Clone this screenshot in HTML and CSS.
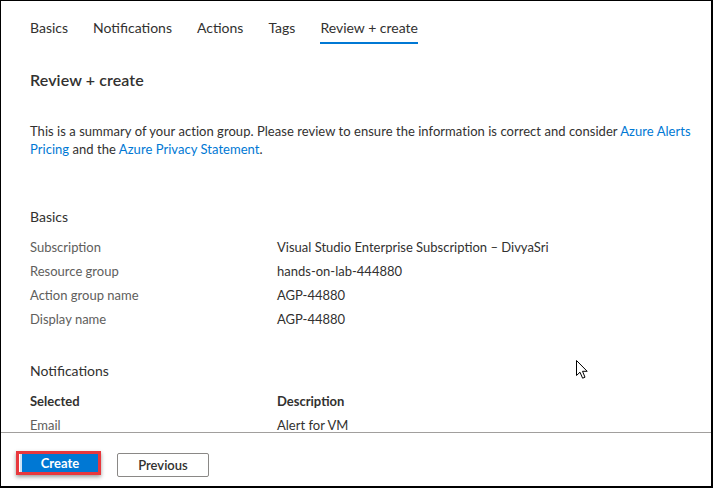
FILE: index.html
```html
<!DOCTYPE html>
<html>
<head>
<meta charset="utf-8">
<link rel="stylesheet" href="styles.css">
</head>
<body>
<div class="frame">
  <nav class="tabs">
    <span class="tab">Basics</span>
    <span class="tab">Notifications</span>
    <span class="tab">Actions</span>
    <span class="tab">Tags</span>
    <span class="tab active">Review + create</span>
  </nav>
  <main class="content">
    <h2 class="title">Review + create</h2>
    <p class="intro">This is a summary of your action group. Please review to ensure the information is correct and consider <a class="link">Azure Alerts Pricing</a> and the <a class="link">Azure Privacy Statement</a>.</p>
    <h3 class="section">Basics</h3>
    <div class="grid">
      <div class="label">Subscription</div><div class="value">Visual Studio Enterprise Subscription – DivyaSri</div>
      <div class="label">Resource group</div><div class="value">hands-on-lab-444880</div>
      <div class="label">Action group name</div><div class="value">AGP-44880</div>
      <div class="label">Display name</div><div class="value">AGP-44880</div>
    </div>
    <h3 class="section section-gap">Notifications</h3>
    <div class="grid">
      <div class="head">Selected</div><div class="head">Description</div>
      <div class="label">Email</div><div class="value">Alert for VM</div>
    </div>
  </main>
  <footer class="footer">
    <div class="highlight"><button class="btn-primary">Create</button></div>
    <button class="btn-secondary">Previous</button>
  </footer>
  <svg class="cursor" width="14" height="20" viewBox="0 0 14 20"><path d="M0.5 0.5 L0.5 15.5 L4 12.2 L6.6 18.2 L9 17.2 L6.5 11.3 L11.2 11.3 Z" fill="#fff" stroke="#000" stroke-width="1" stroke-linejoin="miter"/></svg>
</div>
</body>
</html>
```
FILE: styles.css
```css
* { box-sizing: border-box; }
html, body { margin: 0; padding: 0; background: #fff; }
body { font-family: "Lato", "Liberation Sans", sans-serif; color: #323130; }
.frame {
  position: relative;
  width: 713px; height: 488px;
  border-style: solid; border-color: #000;
  border-width: 1px 2px 2px 1px;
  display: flex; flex-direction: column;
  overflow: hidden;
}
.tabs { display: flex; gap: 25px; padding: 17px 0 0 29px; }
.tab {
  font-size: 14px; line-height: 20px;
  padding-bottom: 4px;
  border-bottom: 2px solid transparent;
  color: #323130;
}
.tab.active { border-bottom-color: #0078d4; }
.content { flex: 1; overflow: hidden; padding: 0 18px 0 29px; }
.title { margin: 25px 0 0; font-size: 16px; line-height: 22px; font-weight: 600; color: #323130; letter-spacing: 0.1px; }
.intro { margin: 31px 0 0; font-size: 13px; line-height: 18px; letter-spacing: 0.04px; }
.link { color: #0078d4; text-decoration: none; }
.section { margin: 49px 0 0; font-size: 14px; line-height: 20px; font-weight: 400; }
.section-gap { margin-top: 30px; }
.grid { display: grid; grid-template-columns: 247px 1fr; margin-top: 8px; font-size: 13px; line-height: 24px; }
.label { color: #605e5c; }
.value { color: #323130; }
.head { font-weight: 700; color: #323130; }
.footer {
  height: 54px; border-top: 1px solid #a19f9d;
  display: flex; align-items: flex-start; gap: 16px;
  padding: 18px 0 0 15px;
}
.highlight {
  border: 3px solid #e8383d;
  padding: 0 0 0 1px;
  box-shadow: 0 2px 4px rgba(0,0,0,0.4);
  display: flex;
}
.btn-primary {
  width: 78px; height: 18px;
  background: #0078d4; color: #fff;
  border: none; border-left: 2px solid #cfe4f6;
  font-family: inherit; font-size: 13px; font-weight: 700;
  padding: 0; line-height: 18px;
}
.btn-secondary {
  margin-top: 2px;
  width: 92px; height: 24px;
  background: #fff; border: 1px solid #8a8886; border-radius: 2px;
  font-family: inherit; font-size: 13px; font-weight: 600; color: #323130;
  padding: 0;
}
.cursor { position: absolute; left: 575px; top: 359px; }
```
